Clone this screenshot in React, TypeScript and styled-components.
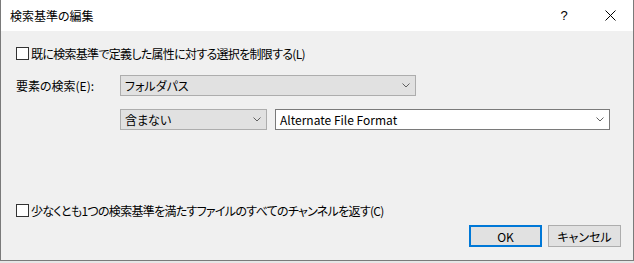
import React from "react";
import styled, { createGlobalStyle } from "styled-components";

const Global = createGlobalStyle`
  html, body { margin: 0; padding: 0; background: #e6e6e6; }
  body {
    font-family: "Noto Sans CJK JP", "Noto Sans", sans-serif;
    font-size: 12px;
    color: #000;
    font-feature-settings: "palt" 1;
  }
  * { box-sizing: border-box; }
`;

const Window = styled.div`
  width: 634px;
  height: 261px;
  display: flex;
  flex-direction: column;
  border: 1px solid #7a7a7a;
  border-top: none;
  background: #f0f0f0;
`;

const TitleBar = styled.div`
  height: 31px;
  flex: none;
  display: flex;
  align-items: center;
  background: #fff;
  padding-left: 9px;
`;

const Title = styled.div`
  flex: 1;
  font-size: 12px;
  line-height: 14px;
`;

const CaptionButton = styled.div`
  width: 46px;
  height: 31px;
  display: flex;
  align-items: center;
  justify-content: center;
  font-family: "Liberation Sans", sans-serif;
  font-size: 13px;
`;

const Body = styled.div`
  flex: 1;
  display: flex;
  flex-direction: column;
  padding: 16px 12px 13px 15px;
`;

const CheckRow = styled.label<{ $top?: string }>`
  display: flex;
  align-items: center;
  height: 13px;
  gap: 2px;
  margin-top: ${(p) => p.$top ?? "0"};
  line-height: 13px;
  white-space: nowrap;
`;

const CheckText = styled.span`
  letter-spacing: -0.7px;
`;

const Box = styled.span`
  width: 13px;
  height: 13px;
  flex: none;
  border: 1px solid #333;
  background: #fff;
`;

const Row = styled.div<{ $top: string }>`
  display: flex;
  align-items: center;
  height: 21px;
  margin-top: ${(p) => p.$top};
`;

const FieldLabel = styled.div`
  width: 104px;
  flex: none;
`;

const Combo = styled.div<{ $width: number; $editable?: boolean }>`
  width: ${(p) => p.$width}px;
  height: 21px;
  flex: none;
  display: flex;
  align-items: center;
  padding: 0 5px 0 4px;
  border: 1px solid ${(p) => (p.$editable ? "#7a7a7a" : "#adadad")};
  background: ${(p) => (p.$editable ? "#fff" : "#e1e1e1")};
`;

const ComboText = styled.span`
  flex: 1;
  white-space: nowrap;
`;

const Gap = styled.div<{ $w: number }>`
  width: ${(p) => p.$w}px;
  flex: none;
`;

const Indent = styled.div`
  width: 104px;
  flex: none;
`;

const ButtonRow = styled.div`
  display: flex;
  justify-content: flex-end;
  gap: 6px;
  margin-top: 8px;
`;

const Button = styled.div<{ $default?: boolean }>`
  width: 73px;
  height: 22px;
  display: flex;
  align-items: center;
  justify-content: center;
  background: #e1e1e1;
  border: ${(p) => (p.$default ? "2px solid #0078d7" : "1px solid #adadad")};
`;

const Chevron = () => (
  <svg width="8" height="5" viewBox="0 0 8 5">
    <path d="M0.5 0.5 L4 4 L7.5 0.5" fill="none" stroke="#606060" strokeWidth="1" />
  </svg>
);

const CloseIcon = () => (
  <svg width="11" height="11" viewBox="0 0 11 11">
    <path d="M0.5 0.5 L10.5 10.5 M10.5 0.5 L0.5 10.5" stroke="#000" strokeWidth="1" />
  </svg>
);

export default function App() {
  return (
    <>
      <Global />
      <Window>
        <TitleBar>
          <Title>検索基準の編集</Title>
          <CaptionButton>?</CaptionButton>
          <CaptionButton>
            <CloseIcon />
          </CaptionButton>
        </TitleBar>
        <Body>
          <CheckRow>
            <Box />
            <CheckText>既に検索基準で定義した属性に対する選択を制限する(L)</CheckText>
          </CheckRow>
          <Row $top="15px">
            <FieldLabel>要素の検索(E):</FieldLabel>
            <Combo $width={296}>
              <ComboText>フォルダパス</ComboText>
              <Chevron />
            </Combo>
          </Row>
          <Row $top="13px">
            <Indent />
            <Combo $width={147}>
              <ComboText>含まない</ComboText>
              <Chevron />
            </Combo>
            <Gap $w={8} />
            <Combo $width={335} $editable>
              <ComboText>Alternate File Format</ComboText>
              <Chevron />
            </Combo>
          </Row>
          <CheckRow $top="auto">
            <Box />
            <CheckText>少なくとも1つの検索基準を満たすファイルのすべてのチャンネルを返す(C)</CheckText>
          </CheckRow>
          <ButtonRow>
            <Button $default>OK</Button>
            <Button>キャンセル</Button>
          </ButtonRow>
        </Body>
      </Window>
    </>
  );
}
